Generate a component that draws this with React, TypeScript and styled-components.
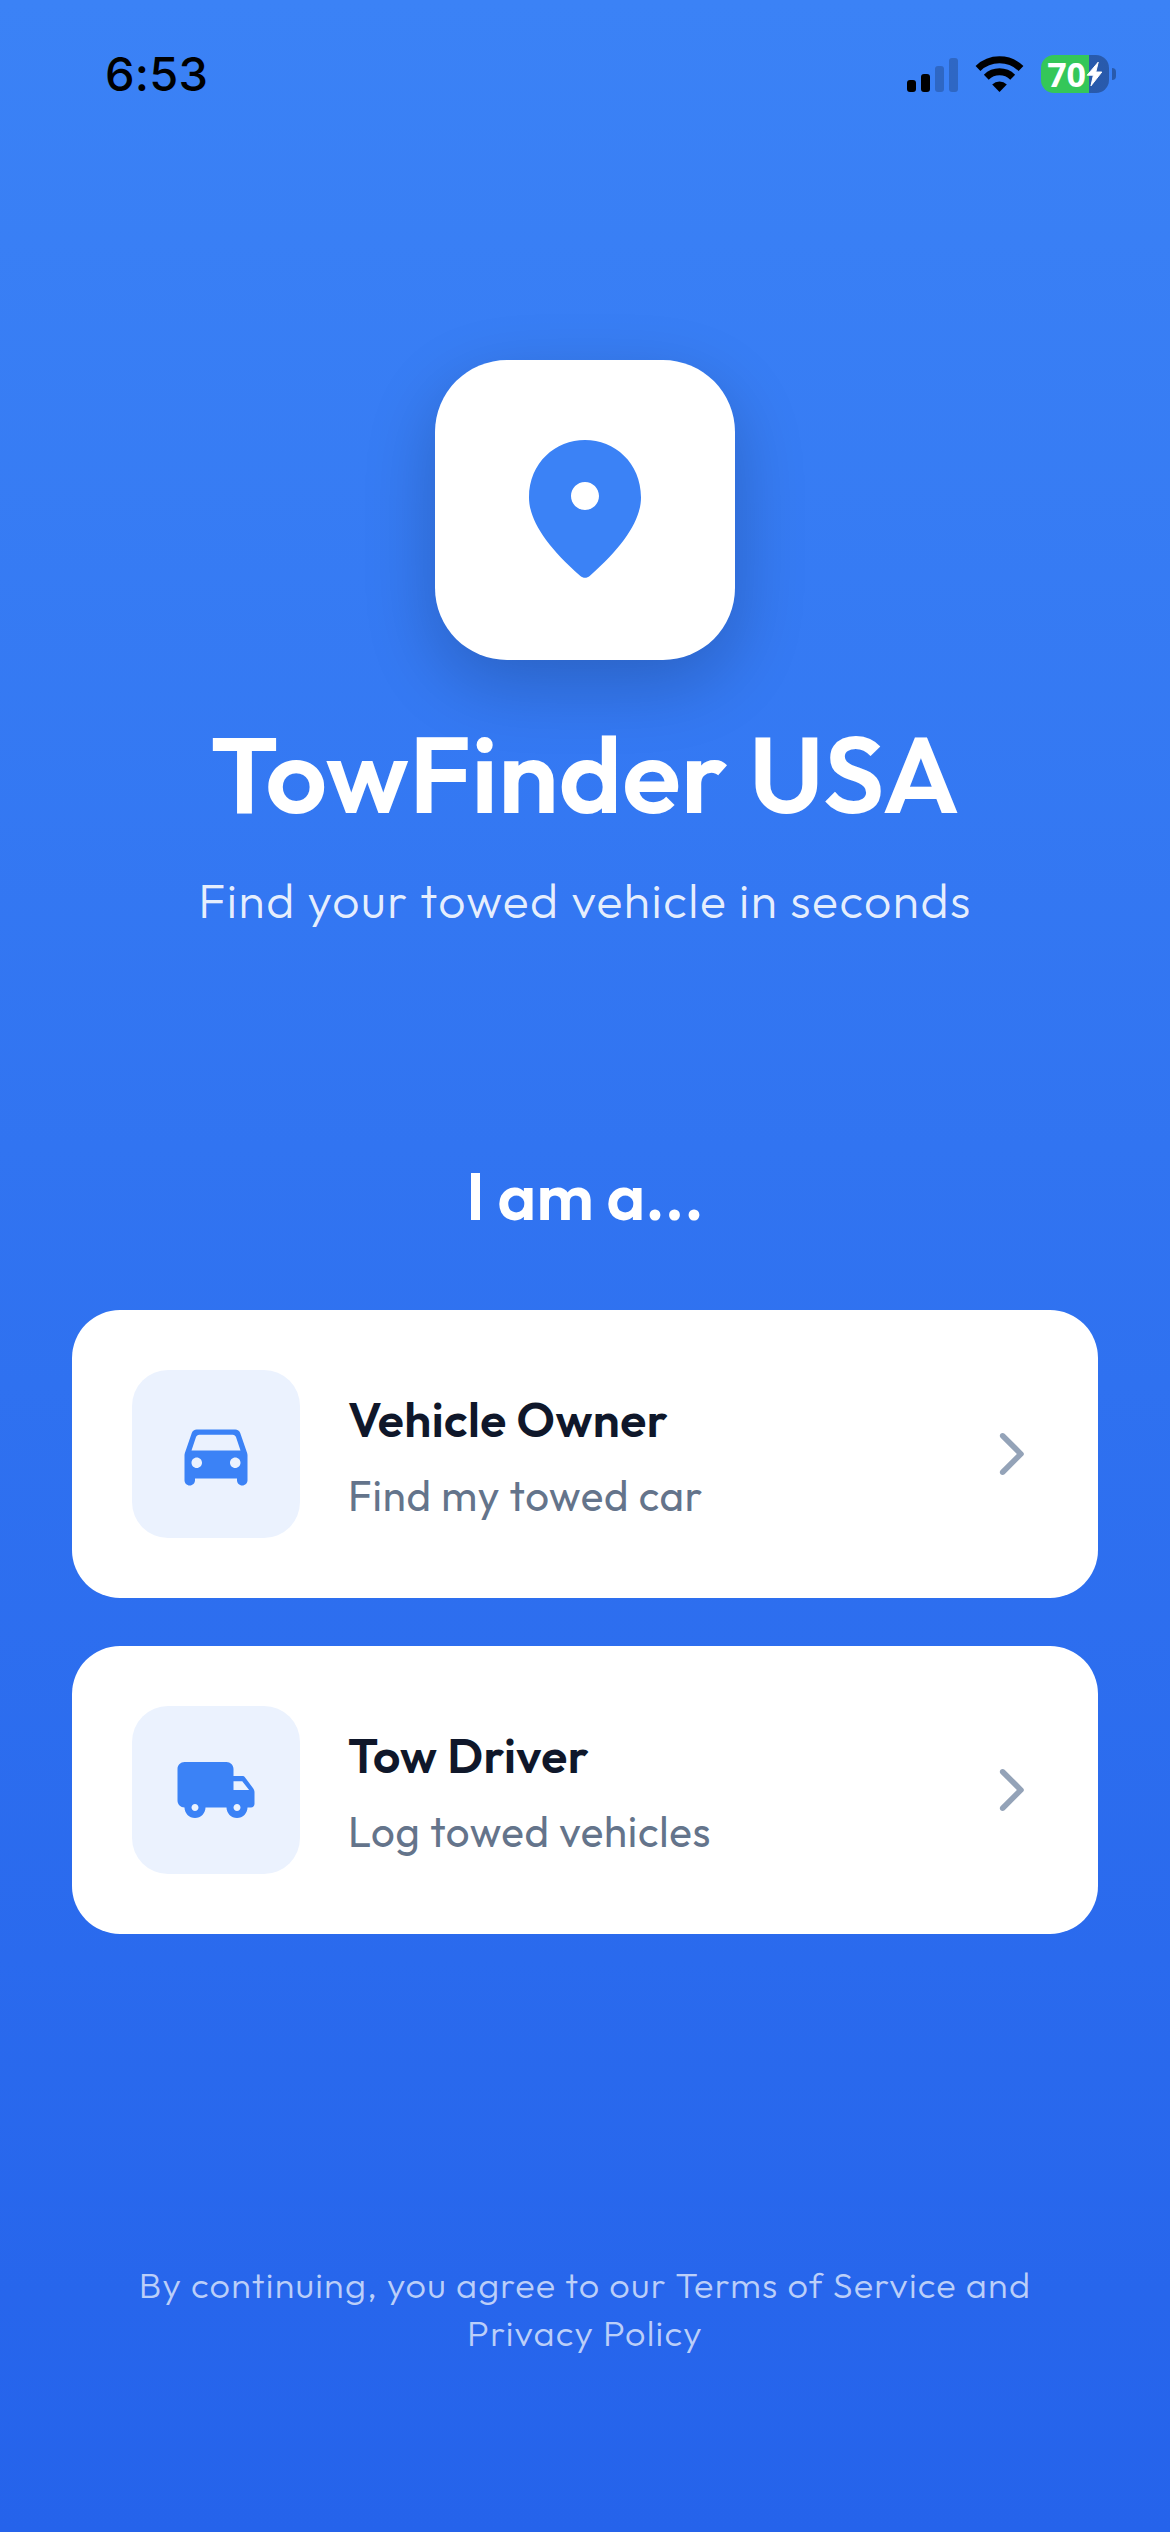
import React from "react";
import styled, { createGlobalStyle } from "styled-components";

const GlobalStyle = createGlobalStyle`
  * { box-sizing: border-box; }
  body { margin: 0; }
`;

const Screen = styled.main`
  display: flex;
  flex-direction: column;
  width: 1170px;
  height: 2532px;
  background: linear-gradient(180deg, #3b82f6 0%, #2563eb 100%);
  font-family: Outfit, Inter, "Liberation Sans", sans-serif;
  color: #fff;
  overflow: hidden;
`;

const StatusBar = styled.header`
  display: flex;
  justify-content: space-between;
  align-items: center;
  height: 148px;
  padding: 0 54px 0 105px;
`;

const Clock = styled.time`
  font: 550 47px/60px Inter, "Liberation Sans", sans-serif;
  letter-spacing: 0.2px;
  color: #000;
`;

const Indicators = styled.div`
  display: flex;
  align-items: center;
  gap: 17px;
`;

const Signal = styled.div`
  display: flex;
  align-items: flex-end;
  gap: 5px;
  height: 36px;
`;

const SignalBar = styled.i<{ $height: number; $on?: boolean }>`
  width: 9px;
  height: ${(p) => p.$height}px;
  border-radius: 3px;
  background: ${(p) => (p.$on ? "#000" : "rgba(0, 0, 0, 0.2)")};
`;

const BatteryWrap = styled.div`
  display: flex;
  align-items: center;
  gap: 3px;
`;

const BatteryBody = styled.div`
  display: flex;
  align-items: center;
  justify-content: center;
  width: 68px;
  height: 38px;
  border-radius: 13px;
  background: linear-gradient(90deg, #34c759 48px, rgba(0, 0, 0, 0.3) 48px);
  font: 700 34px/38px "Noto Sans", "Open Sans", sans-serif;
  letter-spacing: -0.2px;
`;

const BatteryTip = styled.i`
  width: 4px;
  height: 12px;
  border-radius: 0 4px 4px 0;
  background: rgba(0, 0, 0, 0.3);
`;

const Hero = styled.section`
  display: flex;
  flex-direction: column;
  align-items: center;
  padding-top: 212px;
`;

const LogoTile = styled.div`
  display: flex;
  align-items: center;
  justify-content: center;
  width: 300px;
  height: 300px;
  border-radius: 72px;
  background: #fff;
  color: #3b82f6;
  box-shadow: 0 24px 72px rgba(0, 0, 0, 0.2);
`;

const AppName = styled.h1`
  margin: 47px 0 0;
  font-size: 108px;
  line-height: 132px;
  font-weight: 600;
  white-space: nowrap;
`;

const Tagline = styled.p`
  margin: 31px 0 0;
  font-size: 48px;
  line-height: 60px;
  font-weight: 300;
  letter-spacing: 1.5px;
  color: rgba(255, 255, 255, 0.9);
  white-space: nowrap;
`;

const Roles = styled.section`
  display: flex;
  flex-direction: column;
  gap: 48px;
  padding: 224px 72px 0;
`;

const Prompt = styled.h2`
  margin: 0 0 24px;
  font-size: 66px;
  line-height: 84px;
  font-weight: 600;
  text-align: center;
`;

const RoleCard = styled.button`
  display: flex;
  align-items: center;
  height: 288px;
  padding: 0 60px;
  border: 0;
  border-radius: 48px;
  background: #fff;
  font: inherit;
  text-align: left;
`;

const RoleIcon = styled.span`
  display: flex;
  align-items: center;
  justify-content: center;
  width: 168px;
  height: 168px;
  border-radius: 36px;
  background: #ebf2fe;
  color: #3b82f6;
`;

const RoleText = styled.span`
  display: flex;
  flex: 1;
  flex-direction: column;
  gap: 20px;
  padding: 3px 0 0 48px;
  white-space: nowrap;
`;

const RoleTitle = styled.span`
  font-size: 48px;
  line-height: 60px;
  font-weight: 600;
  letter-spacing: 0.45px;
  color: #0f172a;
`;

const RoleHint = styled.span`
  font-size: 42px;
  line-height: 54px;
  font-weight: 400;
  letter-spacing: 0.75px;
  color: #64748b;
`;

const Chevron = styled.span`
  display: flex;
  color: #94a3b8;
`;

const Legal = styled.footer`
  margin-top: auto;
  padding-bottom: 175px;
  font-size: 36px;
  line-height: 48px;
  font-weight: 300;
  letter-spacing: 1.2px;
  text-align: center;
  color: rgba(255, 255, 255, 0.7);
`;

const icons = {
  pin: "M12 2c-4.2 0-8 3.22-8 8.2 0 3.18 2.45 6.92 7.34 11.23.38.33.95.33 1.33 0C17.55 17.12 20 13.38 20 10.2 20 5.22 16.2 2 12 2zm0 10c-1.1 0-2-.9-2-2s.9-2 2-2 2 .9 2 2-.9 2-2 2z",
  car: "M18.92 6.01C18.72 5.42 18.16 5 17.5 5h-11c-.66 0-1.21.42-1.42 1.01l-1.97 5.67c-.07.21-.11.43-.11.66v7.16c0 .83.67 1.5 1.5 1.5S6 20.33 6 19.5V19h12v.5c0 .82.67 1.5 1.5 1.5.82 0 1.5-.67 1.5-1.5v-7.16c0-.22-.04-.45-.11-.66l-1.97-5.67zM6.5 16c-.83 0-1.5-.67-1.5-1.5S5.67 13 6.5 13s1.5.67 1.5 1.5S7.33 16 6.5 16zm11 0c-.83 0-1.5-.67-1.5-1.5s.67-1.5 1.5-1.5 1.5.67 1.5 1.5-.67 1.5-1.5 1.5zM5 11l1.27-3.82c.14-.4.52-.68.95-.68h9.56c.43 0 .81.28.95.68L19 11H5z",
  truck:
    "M19.5 8H17V6c0-1.1-.9-2-2-2H3c-1.1 0-2 .9-2 2v9c0 1.1.9 2 2 2 0 1.66 1.34 3 3 3s3-1.34 3-3h6c0 1.66 1.34 3 3 3s3-1.34 3-3h1c.55 0 1-.45 1-1v-3.33c0-.43-.14-.85-.4-1.2L20.3 8.4c-.19-.25-.49-.4-.8-.4zM6 18c-.55 0-1-.45-1-1s.45-1 1-1 1 .45 1 1-.45 1-1 1zm13.5-8.5l1.96 2.5H17V9.5h2.5zM18 18c-.55 0-1-.45-1-1s.45-1 1-1 1 .45 1 1-.45 1-1 1z",
  forward:
    "M7.38 21.01c.49.49 1.28.49 1.77 0l8.31-8.31c.39-.39.39-1.02 0-1.41L9.15 2.98c-.49-.49-1.28-.49-1.77 0s-.49 1.28 0 1.77L14.62 12l-7.25 7.25c-.48.48-.48 1.28.01 1.76z",
};

function Icon({ name, size }: { name: keyof typeof icons; size: number }) {
  return (
    <svg width={size} height={size} viewBox="0 0 24 24" fill="currentColor" aria-hidden>
      <path d={icons[name]} />
    </svg>
  );
}

function Wifi() {
  return (
    <svg width="49" height="36" viewBox="0 0 49 36" aria-hidden>
      <path d="M3 12.5A31 31 0 0 1 46 12.5" fill="none" stroke="#000" strokeWidth="7" />
      <path d="M11.3 21.2A19 19 0 0 1 37.7 21.2" fill="none" stroke="#000" strokeWidth="7" />
      <path d="M24.5 36 17.2 28.6A10.4 10.4 0 0 1 31.8 28.6Z" />
    </svg>
  );
}

const BoltMark = styled.svg`
  flex: none;
  width: 17px;
  height: 26px;
`;

function Bolt() {
  return (
    <BoltMark viewBox="0 0 17 26" aria-hidden>
      <path
        d="M12.2 1.2 1.2 14.2H7.4L5 24.8 15.8 11H9.8Z"
        fill="#fff"
        stroke="#fff"
        strokeWidth="1"
        strokeLinejoin="round"
      />
    </BoltMark>
  );
}

const roles = [
  { icon: "car" as const, title: "Vehicle Owner", hint: "Find my towed car" },
  { icon: "truck" as const, title: "Tow Driver", hint: "Log towed vehicles" },
];

export default function App() {
  return (
    <Screen>
      <GlobalStyle />
      <StatusBar>
        <Clock>6:53</Clock>
        <Indicators>
          <Signal>
            <SignalBar $height={12} $on />
            <SignalBar $height={18} $on />
            <SignalBar $height={26} />
            <SignalBar $height={34} />
          </Signal>
          <Wifi />
          <BatteryWrap>
            <BatteryBody>
              70
              <Bolt />
            </BatteryBody>
            <BatteryTip />
          </BatteryWrap>
        </Indicators>
      </StatusBar>
      <Hero>
        <LogoTile>
          <Icon name="pin" size={168} />
        </LogoTile>
        <AppName>TowFinder USA</AppName>
        <Tagline>Find your towed vehicle in seconds</Tagline>
      </Hero>
      <Roles>
        <Prompt>I am a...</Prompt>
        {roles.map((role) => (
          <RoleCard key={role.title} type="button">
            <RoleIcon>
              <Icon name={role.icon} size={84} />
            </RoleIcon>
            <RoleText>
              <RoleTitle>{role.title}</RoleTitle>
              <RoleHint>{role.hint}</RoleHint>
            </RoleText>
            <Chevron>
              <Icon name="forward" size={54} />
            </Chevron>
          </RoleCard>
        ))}
      </Roles>
      <Legal>
        By continuing, you agree to our Terms of Service and
        <br />
        Privacy Policy
      </Legal>
    </Screen>
  );
}
